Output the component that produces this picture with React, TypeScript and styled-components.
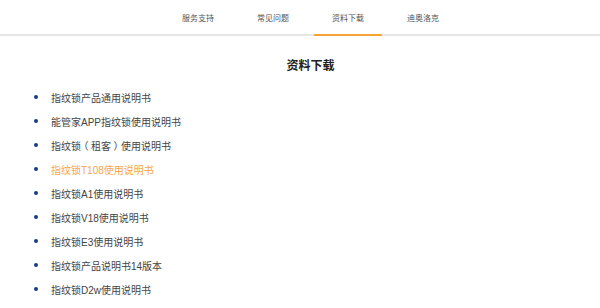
import React from "react";
import styled, { createGlobalStyle } from "styled-components";

const Global = createGlobalStyle`
  html, body { margin: 0; padding: 0; background: #fff; }
  body {
    font-family: "Liberation Sans", "Noto Sans CJK SC", sans-serif;
  }
`;

const Page = styled.div`
  width: 600px;
  height: 308px;
  overflow: hidden;
  background: #fff;
`;

const Nav = styled.nav`
  display: flex;
  justify-content: center;
  gap: 7px;
  height: 34px;
  padding-left: 21px;
  border-bottom: 2px solid #e6e6e6;
`;

const Tab = styled.a<{ $active?: boolean }>`
  display: flex;
  align-items: center;
  padding: 0 18px;
  font-size: 8px;
  color: #555;
  text-decoration: none;
  border-bottom: 2px solid ${(p) => (p.$active ? "#f7a435" : "transparent")};
  margin-bottom: -2px;
`;

const Content = styled.main`
  padding-left: 21px;
`;

const Title = styled.h2`
  margin: 20px 0 0;
  height: 20px;
  line-height: 20px;
  text-align: center;
  font-size: 12px;
  font-weight: bold;
  color: #222;
`;

const List = styled.ul`
  list-style: none;
  margin: 14px 0 0;
  padding: 0 0 0 13px;
  display: flex;
  flex-direction: column;
  gap: 10px;
`;

const Item = styled.li<{ $active?: boolean }>`
  display: flex;
  align-items: center;
  gap: 13px;
  height: 14px;
  font-size: 10px;
  color: ${(p) => (p.$active ? "#f7a74a" : "#444")};
`;

const Label = styled.span`
  white-space: pre;
`;

const Paren = styled.span`
  display: inline-flex;
  justify-content: center;
  width: 10px;
  font-family: "Noto Sans CJK SC", sans-serif;
  font-feature-settings: "halt" 1;
`;

const Dot = styled.span`
  width: 4px;
  height: 4px;
  border-radius: 50%;
  background: #1c3a8c;
  flex: none;
`;

const tabs = ["服务支持", "常见问题", "资料下载", "迪奥洛克"];
const docs = [
  "指纹锁产品通用说明书",
  "能管家APP指纹锁使用说明书",
  "指纹锁（租客）使用说明书",
  "指纹锁T108使用说明书",
  "指纹锁A1使用说明书",
  "指纹锁V18使用说明书",
  "指纹锁E3使用说明书",
  "指纹锁产品说明书14版本",
  "指纹锁D2w使用说明书",
];

function renderLabel(text: string) {
  const parts = text.split(/([（）])/);
  return parts.map((p, i) =>
    p === "（" || p === "）" ? <Paren key={i}>{p}</Paren> : p
  );
}

export default function App() {
  return (
    <Page>
      <Global />
      <Nav>
        {tabs.map((t) => (
          <Tab key={t} $active={t === "资料下载"}>
            {t}
          </Tab>
        ))}
      </Nav>
      <Content>
        <Title>资料下载</Title>
        <List>
          {docs.map((d, i) => (
            <Item key={d} $active={i === 3}>
              <Dot />
              <Label>{renderLabel(d)}</Label>
            </Item>
          ))}
        </List>
      </Content>
    </Page>
  );
}
